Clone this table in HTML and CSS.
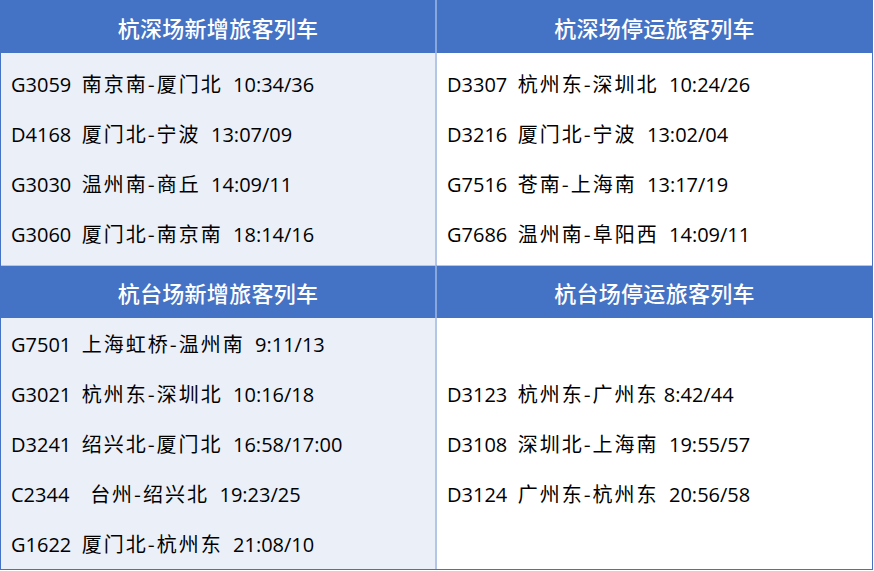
FILE: index.html
```html
<!DOCTYPE html>
<html lang="zh">
<head>
<meta charset="utf-8">
<link rel="stylesheet" href="styles.css">
</head>
<body>
<div class="board">
  <div class="head left">杭深场新增旅客列车</div>
  <div class="head">杭深场停运旅客列车</div>
  <div class="cell shade">
    <div class="line">G3059  <span class="cn">南京南-厦门北</span>  10:34/36</div>
    <div class="line">D4168  <span class="cn">厦门北-宁波</span>  13:07/09</div>
    <div class="line">G3030  <span class="cn">温州南-商丘</span>  14:09/11</div>
    <div class="line">G3060  <span class="cn">厦门北-南京南</span>  18:14/16</div>
  </div>
  <div class="cell">
    <div class="line">D3307  <span class="cn">杭州东-深圳北</span>  10:24/26</div>
    <div class="line">D3216  <span class="cn">厦门北-宁波</span>  13:02/04</div>
    <div class="line">G7516  <span class="cn">苍南-上海南</span>  13:17/19</div>
    <div class="line">G7686  <span class="cn">温州南-阜阳西</span>  14:09/11</div>
  </div>
  <div class="head left">杭台场新增旅客列车</div>
  <div class="head">杭台场停运旅客列车</div>
  <div class="cell shade">
    <div class="line">G7501  <span class="cn">上海虹桥-温州南</span>  9:11/13</div>
    <div class="line">G3021  <span class="cn">杭州东-深圳北</span>  10:16/18</div>
    <div class="line">D3241  <span class="cn">绍兴北-厦门北</span>  16:58/17:00</div>
    <div class="line">C2344    <span class="cn">台州-绍兴北</span>  19:23/25</div>
    <div class="line">G1622  <span class="cn">厦门北-杭州东</span>  21:08/10</div>
  </div>
  <div class="cell">
    <div class="line">D3123  <span class="cn">杭州东-广州东</span> 8:42/44</div>
    <div class="line">D3108  <span class="cn">深圳北-上海南</span>  19:55/57</div>
    <div class="line">D3124  <span class="cn">广州东-杭州东</span>  20:56/58</div>
  </div>
</div>
</body>
</html>
```

FILE: styles.css
```css
html, body {
  margin: 0;
  padding: 0;
  background: #ffffff;
}

.board {
  display: grid;
  grid-template-columns: 436px 435px;
  grid-template-rows: 53px 212px 53px 251px;
  width: 871px;
  border: 1px solid #4472c4;
  border-top: none;
  font-family: "Open Sans", "Noto Sans CJK SC", sans-serif;
  color: #000000;
}

.head {
  background: #4472c4;
  color: #ffffff;
  font-family: "Noto Sans CJK SC", sans-serif;
  font-weight: 500;
  font-size: 22px;
  letter-spacing: 0.3px;
  display: flex;
  align-items: center;
  justify-content: center;
}

.left {
  border-right: 2px solid #9fb6e2;
}

.head.left {
  border-right-color: #8aa7dc;
}

.cell {
  display: flex;
  flex-direction: column;
  justify-content: center;
  padding-left: 10px;
  background: #ffffff;
}

.shade {
  background: #eaeff8;
  border-right: 2px solid #b4c6e7;
}

.board > .head:nth-child(5),
.board > .head:nth-child(6) {
  border-top: 1px solid #b4c6e7;
}

.line {
  height: 50px;
  line-height: 50px;
  font-size: 20px;
  white-space: pre;
}

.cn {
  font-family: "Noto Sans CJK SC", sans-serif;
  font-size: 20px;
  font-weight: 400;
  letter-spacing: 2px;
}
```
